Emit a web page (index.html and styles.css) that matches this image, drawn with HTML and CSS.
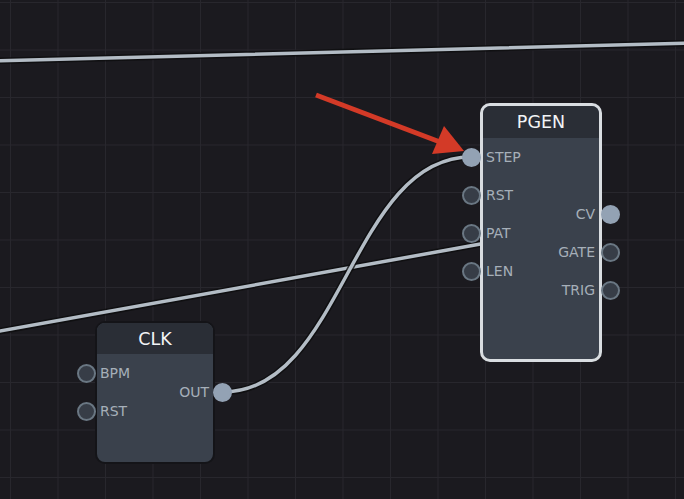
FILE: index.html
```html
<!DOCTYPE html>
<html lang="en">
<head>
  <meta charset="UTF-8" />
  <title>Patch editor</title>
  <link rel="stylesheet" href="styles.css">
</head>
<body>

  <div class="canvas">

    <!-- cabos entre os nós -->
    <svg class="wires" width="684" height="499" viewBox="0 0 684 499">
      <g class="wire">
        <path class="wire-shadow" d="M -5 61 L 690 43" />
        <path class="wire-line" d="M -5 61 L 690 43" />
      </g>
      <g class="wire">
        <path class="wire-shadow" d="M -5 332 L 486 243" />
        <path class="wire-line" d="M -5 332 L 486 243" />
      </g>
      <g class="wire">
        <path class="wire-shadow" d="M 223 392 C 343 392 351 157 471 157" />
        <path class="wire-line" d="M 223 392 C 343 392 351 157 471 157" />
      </g>
    </svg>

    <!-- nó PGEN -->
    <div class="node node-pgen selected">
      <div class="node-title">PGEN</div>
      <div class="node-body">
        <div class="ports inputs">
          <div class="port"><span class="dot linked"></span>STEP</div>
          <div class="port"><span class="dot"></span>RST</div>
          <div class="port"><span class="dot"></span>PAT</div>
          <div class="port"><span class="dot"></span>LEN</div>
        </div>
        <div class="ports outputs">
          <div class="port">CV<span class="dot linked"></span></div>
          <div class="port">GATE<span class="dot"></span></div>
          <div class="port">TRIG<span class="dot"></span></div>
        </div>
      </div>
    </div>

    <!-- nó CLK -->
    <div class="node node-clk">
      <div class="node-title">CLK</div>
      <div class="node-body">
        <div class="ports inputs">
          <div class="port"><span class="dot"></span>BPM</div>
          <div class="port"><span class="dot"></span>RST</div>
        </div>
        <div class="ports outputs">
          <div class="port">OUT<span class="dot linked"></span></div>
        </div>
      </div>
    </div>

    <!-- seta de destaque -->
    <svg class="pointer" width="684" height="499" viewBox="0 0 684 499">
      <line x1="316" y1="95" x2="440" y2="142" />
      <polygon points="464,151 432,154 444,126" />
    </svg>

  </div>

</body>
</html>
```

FILE: styles.css
```css
* {
  box-sizing: border-box;
}

body {
  margin: 0;
  background-color: #1b1a1f;
  font-family: "DejaVu Sans", Verdana, sans-serif;
  overflow: hidden;
}

/* Grade de fundo do editor */
.canvas {
  position: relative;
  width: 684px;
  height: 499px;
  background-color: #1b1a1f;
  background-image:
    linear-gradient(to right, #28272d 1px, transparent 1px),
    linear-gradient(to bottom, #28272d 1px, transparent 1px);
  background-size: 47.5px 47.5px;
  background-position: 10px 2px;
  overflow: hidden;
}

.wires,
.pointer {
  position: absolute;
  top: 0;
  left: 0;
  pointer-events: none;
}

.wire path {
  fill: none;
  stroke-linecap: round;
}

.wire-shadow {
  stroke: #0c0c0e;
  stroke-width: 6.5;
  opacity: 0.8;
}

.wire-line {
  stroke: #b3bcc5;
  stroke-width: 3.5;
}

.pointer {
  z-index: 3;
}

.pointer line {
  stroke: #d33a27;
  stroke-width: 5;
}

.pointer polygon {
  fill: #d33a27;
}

/* Nós */
.node {
  position: absolute;
  display: flex;
  flex-direction: column;
  border-radius: 10px;
  background-color: #3a414c;
  border: 2px solid #141418;
  z-index: 2;
}

.node.selected {
  border: 3px solid #d9dde1;
}

.node-pgen {
  left: 480px;
  top: 103px;
  width: 122px;
  height: 259px;
}

.node-clk {
  left: 95px;
  top: 321px;
  width: 120px;
  height: 143px;
}

.node-title {
  height: 32px;
  display: flex;
  align-items: center;
  justify-content: center;
  background-color: #2a2e36;
  border-radius: 8px 8px 0 0;
  color: #f2f4f6;
  font-size: 17.5px;
}

.node-clk .node-title {
  height: 31px;
}

.node-body {
  flex: 1;
  display: flex;
  justify-content: space-between;
}

.ports {
  display: flex;
  flex-direction: column;
}

.node-pgen .outputs {
  padding-top: 57px;
}

.node-clk .outputs {
  padding-top: 19px;
}

.port {
  position: relative;
  height: 38px;
  display: flex;
  align-items: center;
  color: #a6afb9;
  font-size: 14px;
}

.inputs .port {
  padding-left: 3px;
}

.outputs .port {
  padding-right: 4px;
  justify-content: flex-end;
}

.dot {
  position: absolute;
  top: 9.5px;
  width: 19px;
  height: 19px;
  border-radius: 50%;
  border: 2px solid #6a7783;
  background-color: #373d47;
}

.inputs .dot {
  left: -21px;
}

.outputs .dot {
  right: -21px;
}

.node-clk .inputs .dot {
  left: -20px;
}

.node-clk .outputs .dot {
  right: -19px;
}

.dot.linked {
  border-color: #93a2b4;
  background-color: #93a2b4;
}
```
